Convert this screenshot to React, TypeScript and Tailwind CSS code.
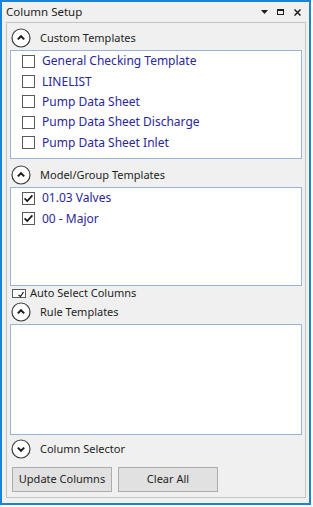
import React from 'react';

const font = { fontFamily: '"Noto Sans", "Open Sans", Arial, sans-serif' };

function CircleChevron({ up }: { up: boolean }) {
  return (
    <svg width="20" height="20" viewBox="0 0 20 20" className="shrink-0">
      <circle cx="10" cy="10" r="9" fill="#ffffff" stroke="#3c3c3c" strokeWidth="1.2" />
      {up ? (
        <path d="M6.8 11.4 L10 8.2 L13.2 11.4" fill="none" stroke="#1e1e1e" strokeWidth="2" />
      ) : (
        <path d="M6.8 8.6 L10 11.8 L13.2 8.6" fill="none" stroke="#1e1e1e" strokeWidth="2" />
      )}
    </svg>
  );
}

function Header({ label, up = true }: { label: string; up?: boolean }) {
  return (
    <div className="h-[24px] flex items-center pl-[4px] gap-[9px] shrink-0">
      <CircleChevron up={up} />
      <span className="text-[11px] text-[#1e1e1e]">{label}</span>
    </div>
  );
}

function Check({ checked }: { checked: boolean }) {
  return (
    <svg width="13" height="13" viewBox="0 0 13 13" className="shrink-0">
      <rect x="0.5" y="0.5" width="12" height="12" fill="#ffffff" stroke="#5a5a5a" />
      {checked && <path d="M2.6 6.4 L5.2 9 L10.4 3.4" fill="none" stroke="#111" strokeWidth="1.6" />}
    </svg>
  );
}

function ListBox({ items, checked, h }: { items: string[]; checked: boolean; h: string }) {
  return (
    <div className={`mx-[3px] border border-[#9db3d4] bg-white shrink-0 ${h}`}>
      {items.map((it) => (
        <div key={it} className="h-[20.4px] flex items-center pl-[11px] gap-[7px]">
          <Check checked={checked} />
          <span className="text-[12px] text-[#2a279a] whitespace-nowrap">{it}</span>
        </div>
      ))}
    </div>
  );
}

export default function App() {
  return (
    <div className="w-[313px] h-[507px] bg-white" style={font}>
      <div className="w-[311px] h-[505px] border-2 border-[#1883d7] bg-[#f0f0f0] flex flex-col">
        <div className="h-[20px] flex items-center pl-[4px] pr-[8px] shrink-0">
          <span className="text-[11.5px] text-[#1e1e1e] flex-1">Column Setup</span>
          <div className="flex items-center">
            <svg width="7" height="4" viewBox="0 0 7 4">
              <path d="M0 0 H7 L3.5 4 Z" fill="#1e1e1e" />
            </svg>
            <svg width="7" height="6" viewBox="0 0 7 6" className="ml-[9px]">
              <rect x="0.5" y="0.5" width="6" height="5" fill="none" stroke="#1e1e1e" />
              <rect x="0" y="0" width="7" height="2" fill="#1e1e1e" />
            </svg>
            <svg width="7" height="7" viewBox="0 0 7 7" className="ml-[10px]">
              <path d="M0.5 0.5 L6.5 6.5 M6.5 0.5 L0.5 6.5" stroke="#1e1e1e" strokeWidth="1.5" />
            </svg>
          </div>
        </div>
        <div className="ml-[4px] mr-[3px] mb-[5px] flex-1 border border-[#c4c4c4] flex flex-col pt-[3px]">
          <Header label="Custom Templates" />
          <ListBox
            h="h-[109px]"
            checked={false}
            items={[
              'General Checking Template',
              'LINELIST',
              'Pump Data Sheet',
              'Pump Data Sheet Discharge',
              'Pump Data Sheet Inlet',
            ]}
          />
          <div className="mt-[4px]">
            <Header label="Model/Group Templates" />
          </div>
          <ListBox h="h-[99px]" checked={true} items={['01.03 Valves', '00 - Major']} />
          <div className="h-[14px] flex items-center pl-[5px] gap-[4px] shrink-0">
            <svg width="14" height="9" viewBox="0 0 14 9" className="shrink-0">
              <rect x="0.5" y="0.5" width="13" height="8" fill="#ffffff" stroke="#5a5a5a" />
              <path d="M6.5 6 L8.5 7.5 L11.5 3" fill="none" stroke="#111" strokeWidth="1.2" />
            </svg>
            <span className="text-[11px] text-[#1e1e1e]">Auto Select Columns</span>
          </div>
          <Header label="Rule Templates" />
          <ListBox h="h-[111px]" checked={false} items={[]} />
          <div className="mt-[2px]">
            <Header label="Column Selector" up={false} />
          </div>
          <div className="flex gap-[6px] pl-[5px] mt-[6px]">
            <button className="w-[100px] h-[25px] bg-[#e1e1e1] border border-[#adadad] text-[11px] text-[#1e1e1e]">
              Update Columns
            </button>
            <button className="w-[100px] h-[25px] bg-[#e1e1e1] border border-[#adadad] text-[11px] text-[#1e1e1e]">
              Clear All
            </button>
          </div>
        </div>
      </div>
    </div>
  );
}
